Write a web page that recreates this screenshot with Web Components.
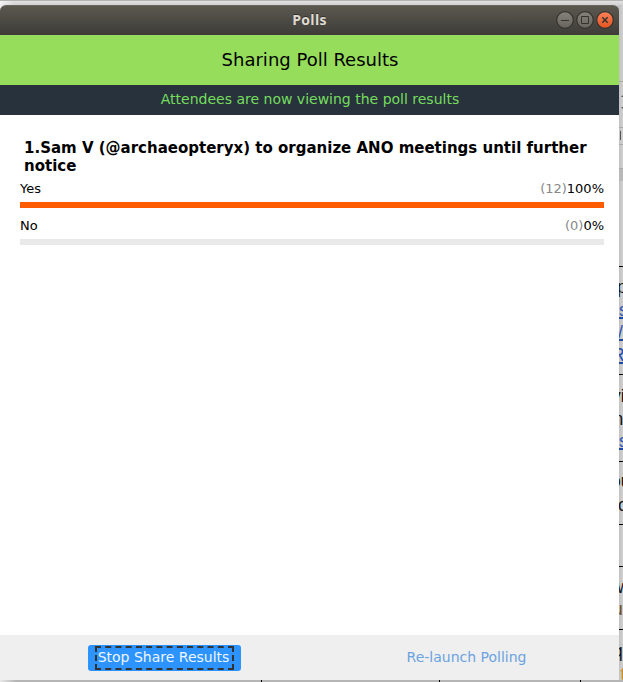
<!DOCTYPE html>
<html lang="en"><head><meta charset="utf-8"><title>Polls</title>
<style>html,body{margin:0;height:100%;overflow:hidden}body{font-family:"DejaVu Sans",sans-serif;color:#000}</style></head>
<body><poll-desktop></poll-desktop>
<script>
function define(name, html, setup){
  const t=document.createElement('template'); t.innerHTML=html;
  customElements.define(name, class extends HTMLElement{
    constructor(){super();this.attachShadow({mode:'open'}).append(t.content.cloneNode(true));}
    connectedCallback(){ if(setup) setup(this,this.shadowRoot); }
  });
}
/* Document window behind the dialog; only its edges are visible. */
define('back-document', `<style>
:host{display:block;position:absolute;inset:0;overflow:hidden;background:#c9c9c9}
svg{display:block;width:623px;height:682px}
text{font-family:"Liberation Sans",sans-serif;font-size:17.5px}
</style><svg viewBox="0 0 623 682">
<defs><linearGradient id="t" x2="0" y2="1"><stop stop-color="#e6e5e6"/><stop offset="1" stop-color="#cfcecf"/></linearGradient>
<linearGradient id="r"><stop stop-color="#bebebe"/><stop offset="1" stop-color="#d0d0d0"/></linearGradient>
<linearGradient id="l"><stop stop-color="#fff" stop-opacity=".7"/><stop offset="1" stop-color="#fff" stop-opacity="0"/></linearGradient></defs>
<rect width="623" height="6" fill="url(#t)"/><rect width="623" height="1" fill="#b5b3b4"/>
<rect y="1" width="14" height="8" fill="url(#l)"/>
<rect x="618" y="5" width="5" height="677" fill="url(#r)"/>
<path d="M619 81.500h4M619 127.500h4M619 144.500h4M619 168.500h4" stroke="#aaa"/>
<path d="M619 169h4v12h-4z" fill="#b9b9b9"/>
<path d="M621 97l2-2v2zM621 107l2 2v-2z" fill="#555"/><path d="M620.500 131v9" stroke="#555"/>
<rect y="680" width="623" height="2" fill="#b5b5b5"/><rect y="680" width="16" height="2" fill="url(#l)"/>
<path d="M619 266.500h4M619 374.500h4M619 461.500h4M619 524.500h4M619 566.500h4M619 629.500h4M261.500 680v2M439.500 680v2M580.500 680v2" stroke="#000"/>
<path d="M619 318h4M619 340h4M619 363h4M619 449h4" stroke="#1d4aa5" stroke-width="2"/>
<g fill="#111"><text x="617" y="293">p</text><text x="612" y="402">vi</text><text x="613.500" y="425">n</text><text x="611" y="487">ou</text><text x="618" y="511">c</text><text x="617" y="593">w</text><text x="613" y="615" fill="#6f4a1c">u</text><text x="613" y="657">q</text><text x="620.500" y="680" fill="#d08a30">t</text></g>
<g fill="#2a50ae"><text x="619" y="316">s</text><text x="618" y="338">/</text><text x="612" y="361">R</text><text x="619" y="447">s</text></g>
</svg>`);
define('window-button', `<style>
:host{display:block;width:18px;height:18px}svg{display:block}
</style><svg width="18" height="18" viewBox="0 0 18 18"><defs>
<linearGradient id="g" x2="0" y2="1"><stop stop-color="#85827a"/><stop offset="1" stop-color="#66645d"/></linearGradient>
<linearGradient id="o" x2="0" y2="1"><stop stop-color="#f9825a"/><stop offset="1" stop-color="#e4531f"/></linearGradient></defs>
<circle cx="9" cy="9" r="8.300" stroke="#35332e" stroke-width="1.200"/><path fill="none" stroke="#35332e"/></svg>`,(el,r)=>{
 const k=el.getAttribute('kind');
 r.querySelector('circle').setAttribute('fill',k==='close'?'url(#o)':'url(#g)');
 const p=r.querySelector('path');
 p.setAttribute('d',{min:'M5 9.500h8',max:'M5.500 5.500h7v7h-7z',close:'M6.300 6.300l5.400 5.400M11.700 6.300l-5.400 5.400'}[k]);
 if(k==='close')p.setAttribute('stroke-width','1.500');
});
define('title-bar', `<style>
:host{box-sizing:border-box;display:grid;grid-template-columns:1fr auto 1fr;align-items:center;height:30px;padding-right:5px;background:linear-gradient(#5b584f,#3d3c38);border-top:1px solid #69665b;border-radius:6px 6px 0 0;color:#dfdbd2;font:bold 14px/26px "Open Sans","Noto Sans",sans-serif}
.name{grid-column:2;padding:0 0 2px 5px;letter-spacing:.3px;text-shadow:0 -1px #33312d}
.buttons{display:flex;justify-content:flex-end;gap:2px;padding-bottom:1px}
</style><span class="name"><slot></slot></span><div class="buttons"><window-button kind="min"></window-button><window-button kind="max"></window-button><window-button kind="close"></window-button></div>`);
define('poll-banner', `<style>
:host{display:block;text-align:center;padding-left:1px;background:#97dd5c;font-size:18px;line-height:50px;height:50px}
:host([status]){background:#28323c;color:#75dd5c;font-size:14px;line-height:29px;height:30px}
span{white-space:nowrap}
</style><span><slot></slot></span>`);
define('poll-option', `<style>
:host{display:block;height:37px;font-size:13px}
.row{display:flex;justify-content:space-between;line-height:18px;height:22px}
.count{color:#888}.track{height:6px;background:#e9e9e9}.fill{height:6px;background:#ff5b00}
</style><div class="row"><span><slot></slot></span><span><span class="count"></span><span class="pct"></span></span></div><div class="track"><div class="fill"></div></div>`,(el,r)=>{
 r.querySelector('.count').textContent='('+el.getAttribute('count')+')';
 r.querySelector('.pct').textContent=el.getAttribute('percent')+'%';
 r.querySelector('.fill').style.width=el.getAttribute('percent')+'%';
});
define('poll-question', `<style>
:host{display:block;flex:1;padding:24px 15px 0 20px;background:#fff}
h2{margin:0 0 5px;padding-left:4px;font-size:15px;line-height:18px}
</style><h2><slot name="title"></slot></h2><slot></slot>`);
define('poll-button', `<style>
:host{display:flex;justify-content:center;font-size:14px}
button{box-sizing:border-box;font:inherit;line-height:22px;height:26px;border:0;padding:0 0 2px;background:none;color:#6ba3e0;white-space:nowrap}
:host([primary]) button{width:153px;padding:1px 7px;background:#2d93ff;color:#eef6ff;border-radius:3px}
:host([primary]) span{box-sizing:border-box;display:block;height:24px;padding-right:2px;border:2px dashed #333;line-height:19px}
</style><button><span><slot></slot></span></button>`);
define('poll-footer', `<style>
:host{box-sizing:border-box;display:grid;grid-template-columns:329px 275px;align-items:center;height:45px;background:#efefef}
</style><slot></slot>`);
define('poll-window', `<style>
:host{position:absolute;left:0;top:5px;width:619px;height:675px;display:flex;flex-direction:column}
</style><slot></slot>`);
define('poll-desktop', `<style>:host{display:block;position:relative;width:623px;height:682px;overflow:hidden}</style>
<back-document></back-document>
<poll-window><title-bar>Polls</title-bar><poll-banner>Sharing Poll Results</poll-banner><poll-banner status>Attendees are now viewing the poll results</poll-banner>
<poll-question><span slot="title">1.Sam V (@archaeopteryx) to organize ANO meetings until further notice</span>
<poll-option count="12" percent="100">Yes</poll-option><poll-option count="0" percent="0">No</poll-option></poll-question>
<poll-footer><poll-button primary>Stop Share Results</poll-button><poll-button>Re-launch Polling</poll-button></poll-footer></poll-window>`);
</script></body></html>
